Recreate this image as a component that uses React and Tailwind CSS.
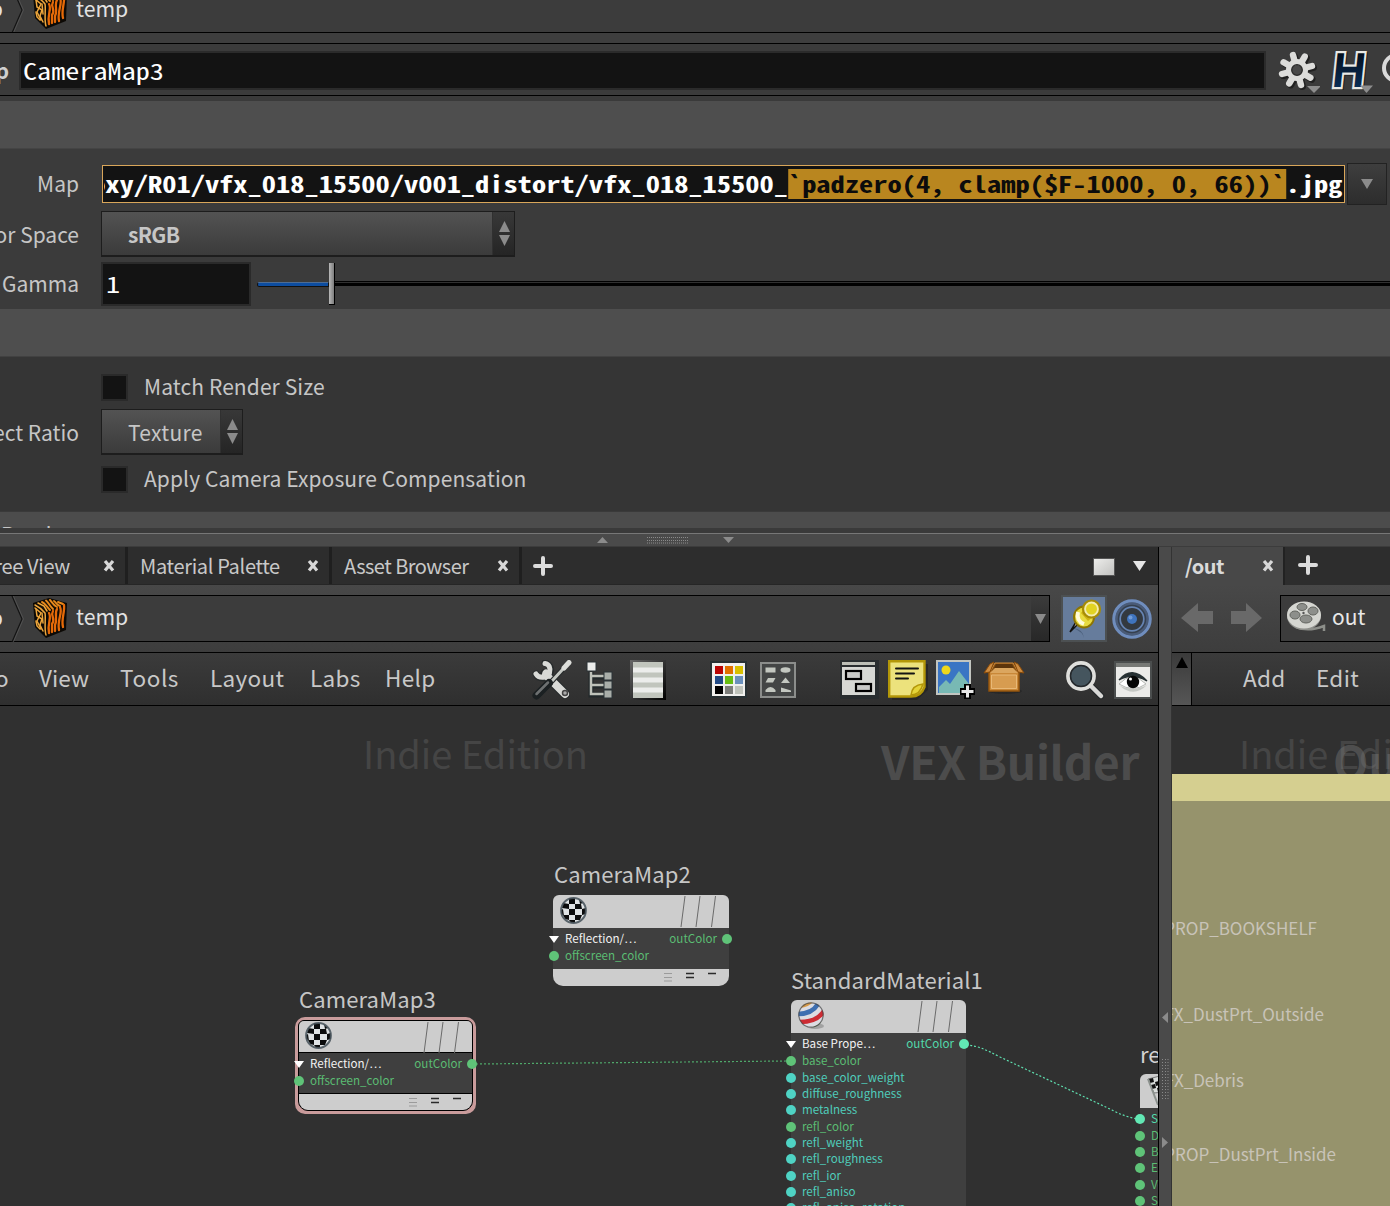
import React from "react";

const SANS = "font-['Noto_Sans_CJK_SC','Noto_Sans_CJK_JP',sans-serif]";
const MONO = "font-['Noto_Sans_Mono_CJK_SC','Noto_Sans_Mono_CJK_JP','DejaVu_Sans_Mono',monospace]";

function TigerBox() {
  return (
    <svg width="36" height="42" viewBox="0 0 36 42" className="shrink-0">
      <path d="M1 6 L17 1 L35 6 L34 33 L14 41 L3 30Z" fill="#0c0905" />
      <path d="M2 7 L17 2 L33 6 L14 15Z" fill="#191005" />
      <g fill="none" strokeLinecap="round">
        <g stroke="#eda63c" strokeWidth="1.5">
          <path d="M3 8 C7 10 10 12 13 16 C14 20 12 33 14 38" />
          <path d="M3 11 L9 16 L5 24 L9 32" />
          <path d="M4 12 L5 19 L10 22 L8 28 L11 34" />
          <path d="M4 24 L5 29 L8 32M10 16 L11 26" />
          <path d="M6 6 L12 9 L15 14" />
        </g>
        <g stroke="#e98a1c" strokeWidth="1.9">
          <path d="M10 5 C13 6 14 9 18 13" />
          <path d="M14 3.5 C17 6 17 8 21 12" />
          <path d="M18 3 C20 5 21 8 25 10" />
          <path d="M22 4 C24 5 24 8 28 9" />
          <path d="M26 5 L31 7" />
        </g>
        <g stroke="#e56a08" strokeWidth="2.3">
          <path d="M17 16 C20 21 15 26 17 36" />
          <path d="M21 14 C18 19 24 21 20 27 L20 35" />
          <path d="M25 12 C22 17 26 22 23 28 L23 34" />
          <path d="M28 10 C31 16 25 22 27 33" />
          <path d="M32 8 C33 15 29 22 31 30" />
        </g>
      </g>
    </svg>
  );
}

function Chevron() {
  return (
    <svg width="14" height="46" viewBox="0 0 14 46" className="shrink-0" fill="none">
      <path d="M1 0 L11 23 L1 46" stroke="#141414" strokeWidth="1.2" />
      <path d="M2.4 0 L12.4 23 L2.4 46" stroke="#575757" strokeWidth="0.8" />
    </svg>
  );
}

function Tri({ className, dir = "down", w = 12, h = 10, fill = "#8b8b8b" }) {
  const d = {
    down: `M0 0H${w}L${w / 2} ${h}Z`,
    up: `M0 ${h}H${w}L${w / 2} 0Z`,
    left: `M${w} 0V${h}L0 ${h / 2}Z`,
    right: `M0 0V${h}L${w} ${h / 2}Z`,
  }[dir];
  return (
    <svg width={w} height={h} className={className}>
      <path d={d} fill={fill} />
    </svg>
  );
}

function Gear() {
  return (
    <svg width="42" height="44" viewBox="0 0 42 44">
      <g stroke="#161616" strokeWidth="7" strokeLinecap="round" opacity=".7">
        {[8, 53, 98, 143].map((a) => (
          <path key={a} d="M20.5 7V38" transform={`rotate(${a - 23} 20.5 22.5)`} />
        ))}
      </g>
      <g stroke="#dcdcda" strokeWidth="6.4" strokeLinecap="round">
        {[8, 53, 98, 143].map((a) => (
          <path key={a} d="M19 5.500V36.500" transform={`rotate(${a - 23} 19 21)`} />
        ))}
      </g>
      <circle cx="19" cy="21" r="11" fill="#dcdcda" />
      <circle cx="19" cy="21" r="5.300" fill="#484848" stroke="#2a2a2a" strokeWidth="1.300" />
      <path d="M29 37H43L36 44Z" fill="#8d8d8d" />
    </svg>
  );
}

function HLogo() {
  return (
    <svg width="44" height="44" viewBox="0 0 44 44">
      <defs>
        <linearGradient id="hg" x1="0" y1="0" x2="0" y2="1">
          <stop offset="0" stopColor="#02060c" />
          <stop offset="1" stopColor="#0b3566" />
        </linearGradient>
      </defs>
      <g transform="translate(4.500 -0.500) skewX(-6)" fontFamily="Liberation Sans" fontWeight="bold" fontSize="49">
        <text x="2" y="39.500" textLength="33" lengthAdjust="spacingAndGlyphs" fill="#1c1c1c" stroke="#1c1c1c" strokeWidth="4">H</text>
        <text x="0.500" y="38" textLength="33" lengthAdjust="spacingAndGlyphs" fill="url(#hg)" stroke="#e9e9e6" strokeWidth="4.500" paintOrder="stroke">H</text>
      </g>
      <path d="M30 36.500H43L36.500 44Z" fill="#8d8d8d" />
    </svg>
  );
}

function Stepper() {
  return (
    <div className="flex w-[22px] flex-col items-center justify-center gap-[3px] border-l border-[#303030] bg-gradient-to-b from-[#383838] to-[#252525] pl-px">
      <Tri dir="up" w={11} h={11} />
      <Tri w={11} h={11} />
    </div>
  );
}

function Label({ children }) {
  return <div className="flex w-[79px] shrink-0 justify-end whitespace-nowrap leading-none">{children}</div>;
}

function Check({ children }) {
  return (
    <div className="flex h-[28px] items-center pl-[101px]">
      <span className="h-[27px] w-[27px] border-2 border-[#2a2a2a] bg-[#131313]" />
      <span className="ml-4 whitespace-nowrap pb-[2px] leading-none tracking-[0.1px]">{children}</span>
    </div>
  );
}

function CloseX() {
  return (
    <svg width="12" height="12" viewBox="0 0 12 12">
      <path d="M2 1L10 10.500M10 1L2 10.500" stroke="#d8d8d8" strokeWidth="3.2" />
    </svg>
  );
}

function Plus() {
  return (
    <svg width="20" height="20" viewBox="0 0 20 20">
      <path d="M10 2V18M2 10H18" stroke="#dcdcdc" strokeWidth="4" strokeLinecap="round" />
    </svg>
  );
}

function Tools() {
  return (
    <svg width="40" height="40" viewBox="0 0 40 40">
      <g fill="none" strokeLinecap="round">
        <path d="M13 14L33 34" stroke="#272b2c" strokeWidth="10" />
        <path d="M4 14C7 20 16 19 18 13C20 8 17 4 13 3" stroke="#272b2c" strokeWidth="7" />
        <path d="M14 15L33 34" stroke="#d9dad7" strokeWidth="8" />
        <path d="M4 14C7 19 16 18 17.500 13C19 8 17 4 13 3.500" stroke="#d9dad7" strokeWidth="5" />
        <path d="M14 13L15 14" stroke="#d9dad7" strokeWidth="7" />
        <circle cx="33" cy="33" r="2.500" stroke="#444" strokeWidth="1.500" fill="#aaa" />
        <path d="M20 21L33 7" stroke="#2b2e2f" strokeWidth="5.500" />
        <path d="M20 21L31 9" stroke="#c6c9c4" strokeWidth="3" />
        <path d="M32 8L37 2.500" stroke="#dddeda" strokeWidth="5" />
        <path d="M4.500 35.500L17 23" stroke="#1b2022" strokeWidth="8" />
        <path d="M4.500 34L16 22.500" stroke="#6d7071" strokeWidth="2.500" />
      </g>
    </svg>
  );
}

function TreeIcon() {
  return (
    <svg width="28" height="38" viewBox="0 0 28 38">
      <rect x="1" y="1" width="9" height="9" fill="#ecedeb" stroke="#2b3336" />
      <path d="M5 11V34H18M5 16H18M5 25H18" fill="none" stroke="#22292b" strokeWidth="5" />
      <path d="M5 11V33H18M5 15H18M5 24H18" fill="none" stroke="#bfc2ba" strokeWidth="2.500" />
      <g fill="#a9aea9" stroke="#2b3336"><rect x="18" y="11" width="8" height="8" /><rect x="18" y="20" width="8" height="8" /><rect x="18" y="29" width="8" height="8" /></g>
    </svg>
  );
}

function ListIcon() {
  return (
    <svg width="36" height="40" viewBox="0 0 36 40">
      <defs><linearGradient id="lg1" x1="0" y1="0" x2="1" y2="1"><stop offset="0" stopColor="#666" /><stop offset="1" stopColor="#000" /></linearGradient></defs>
      <rect width="36" height="40" fill="url(#lg1)" />
      <rect x="3" y="2" width="30" height="36" fill="#c1c5bd" />
      <path d="M3 10H33M3 20H33M3 30H33" stroke="#ecedeb" strokeWidth="5" />
    </svg>
  );
}

function Palette() {
  const c = ["#b80404", "#e07000", "#d8c000", "#204a87", "#68bd12", "#6a90bd", "#000", "#7c7d7a", "#c0c4bc"];
  return (
    <svg width="37" height="37" viewBox="0 0 37 37">
      <rect width="37" height="37" fill="#273033" />
      <rect x="2" y="2" width="33" height="33" fill="#f0f0ee" />
      {c.map((f, i) => <rect key={i} x={5 + (i % 3) * 10} y={5 + Math.floor(i / 3) * 10} width="8" height="8" fill={f} />)}
    </svg>
  );
}

function Shapes() {
  return (
    <svg width="36" height="36" viewBox="0 0 36 36">
      <rect x="1" y="1" width="34" height="34" fill="#434545" stroke="#8b8d8b" strokeWidth="2" />
      <g fill="#c3c7c0">
        <rect x="5.500" y="5.500" width="10" height="5" /><ellipse cx="25.500" cy="8" rx="5" ry="2.800" />
        <path d="M8 16H15.500L13 20.500H5.500ZM25.500 15.500L30 21H21ZM5.500 30V28Q10.500 22 15.500 28V30ZM21 30V25.500L31 28.500V30Z" />
      </g>
    </svg>
  );
}

function Boxes() {
  return (
    <svg width="40" height="40" viewBox="0 0 40 40">
      <rect x="0" y="0" width="39" height="39" fill="#282d2f" />
      <rect x="2" y="2" width="33" height="3" fill="#bbbeb6" /><rect x="2" y="7" width="33" height="28" fill="#d6d8d4" />
      <g fill="#c9cac8" stroke="#000" strokeWidth="2.200"><rect x="6" y="11" width="15" height="8" /><rect x="16" y="24" width="15" height="7" /></g>
    </svg>
  );
}

function Note() {
  return (
    <svg width="40" height="40" viewBox="0 0 40 40">
      <path d="M4 4H40V30L29 40H4Z" fill="#222" opacity=".7" />
      <path d="M1.200 1.200H36.500V27Q33 37 22 36.500H1.200Z" fill="#ece27c" stroke="#b39708" strokeWidth="2.400" />
      <path d="M23 35Q24 25 35 24Q32 35 23 35Z" fill="#e4d438" stroke="#b39708" strokeWidth="1.500" />
      <path d="M8 8.500H30M8 13.500H26M8 18.500H20" stroke="#141414" strokeWidth="2" strokeLinecap="round" />
    </svg>
  );
}

function Picture() {
  return (
    <svg width="42" height="42" viewBox="0 0 42 42">
      <rect x="1" y="1" width="33" height="33" fill="#3a75c4" stroke="#c2c5c0" strokeWidth="2" />
      <circle cx="10" cy="10" r="4.500" fill="#eed81b" />
      <path d="M3 33V27L10 20L14 24L23 11L33 24V33Z" fill="#78b9b4" />
      <path d="M31.500 24V39M24 31.500H39" stroke="#000" strokeWidth="7" />
      <path d="M31.500 25.500V37.500M25.500 31.500H37.500" stroke="#e8e8e8" strokeWidth="3" />
    </svg>
  );
}

function Carton() {
  return (
    <svg width="42" height="36" viewBox="0 0 42 36">
      <ellipse cx="22" cy="31" rx="17" ry="3" fill="#222" opacity=".6" />
      <path d="M6 12H36V31H6Z" fill="#c98838" stroke="#94540d" strokeWidth="1.500" />
      <path d="M8.500 15H33.500V28.500H8.500Z" fill="#d79c50" stroke="#e8b876" />
      <path d="M12 3H30L35 12H7Z" fill="#875012" stroke="#d18a38" />
      <path d="M13 4L11 8H31L29 4Z" fill="#5d350b" />
      <path d="M11 2L7 12L1 13L7 4ZM31 2L35 12L41 13L35 4Z" fill="#cd8b40" stroke="#894b09" />
      <path d="M7 13L12 8H30L35 13Z" fill="#dba65f" />
    </svg>
  );
}

function Magnifier() {
  return (
    <svg width="40" height="40" viewBox="0 0 40 40">
      <path d="M25 25L36 36" stroke="#25282a" strokeWidth="6.500" strokeLinecap="round" />
      <path d="M25 25L36 36" stroke="#d9d9d7" strokeWidth="4.500" strokeLinecap="round" />
      <circle cx="16" cy="16" r="13" fill="#45555e" stroke="#dfdfdc" strokeWidth="3.800" />
      <circle cx="16" cy="16" r="10.500" fill="none" stroke="#25292c" strokeWidth="1.500" />
    </svg>
  );
}

function Eye() {
  return (
    <svg width="38" height="38" viewBox="0 0 38 38">
      <rect width="38" height="38" fill="#4b4e4e" />
      <rect x="2" y="2" width="34" height="4" fill="#777976" /><rect x="2" y="6" width="34" height="30" fill="#ebebe9" />
      <path d="M5 23Q18 9 32 23Q19 32 5 23Z" fill="#fff" stroke="#b6b8b5" />
      <path d="M5 19Q18 4 33 20Q18 11 5 19Z" fill="#273134" stroke="#273134" strokeWidth="1.300" />
      <circle cx="19" cy="21" r="6.200" fill="#050606" />
      <circle cx="16.500" cy="18" r="1.500" fill="#fff" />
      <path d="M6 25Q20 37 33 24Q20 31 6 25Z" fill="#c5c8c4" />
    </svg>
  );
}

function Pin() {
  return (
    <div className="flex h-[47px] w-[46px] items-center justify-center border-2 border-[#4c5052] bg-[#667c9c]">
      <svg width="42" height="43" viewBox="0 0 42 43">
        <path d="M10 31Q20 32 21 41Q20 35 10 31Z" fill="#33455d" opacity=".5" />
        <path d="M15 27L7 35L13 25Z" fill="#eee" stroke="#111" strokeWidth="1.500" />
        <ellipse cx="21" cy="20" rx="10" ry="10.500" fill="#e8db41" stroke="#8d7503" strokeWidth="2" />
        <path d="M15 15Q13 24 21 27" stroke="#fffbd9" strokeWidth="4" fill="none" />
        <path d="M18 16L25 24L32 18L24 9Z" fill="#cfb313" />
        <circle cx="28.500" cy="12" r="8.500" fill="#f3ebad" stroke="#a68b05" strokeWidth="2.200" />
        <circle cx="28.500" cy="12" r="5.500" fill="#e2d322" />
      </svg>
    </div>
  );
}

function Target() {
  return (
    <svg width="42" height="42" viewBox="0 0 42 42">
      <circle cx="21" cy="21" r="18" fill="#35404f" stroke="#6f8dbd" strokeWidth="3.500" />
      <circle cx="21" cy="21" r="15.500" fill="none" stroke="#4a5b77" strokeWidth="2.500" />
      <circle cx="21" cy="21" r="11.800" fill="#333940" stroke="#6684b3" strokeWidth="1.700" />
      <circle cx="21" cy="21" r="5" fill="#3f74be" />
      <circle cx="19.500" cy="19.500" r="2" fill="#6f9bd8" />
    </svg>
  );
}

function Reel() {
  return (
    <svg width="42" height="34" viewBox="0 0 42 34">
      <path d="M10 27Q22 32 38 26V31" fill="none" stroke="#8d8f8a" strokeWidth="2.500" />
      <ellipse cx="18" cy="16" rx="17" ry="14" fill="#8f908c" />
      <ellipse cx="18" cy="15" rx="17" ry="13.500" fill="#d5d6d1" />
      <g fill="#8d8f8b" stroke="#62645f"><ellipse cx="16" cy="7" rx="5" ry="3.500" /><ellipse cx="27" cy="11" rx="5" ry="4" /><ellipse cx="9" cy="15" rx="5" ry="4" /><ellipse cx="20" cy="19" rx="6" ry="4" /></g>
      <circle cx="17.500" cy="13" r="1.200" fill="#555" />
    </svg>
  );
}

function Checker() {
  return (
    <svg width="27" height="27" viewBox="0 0 27 27">
      <circle cx="13.500" cy="13.500" r="13" fill="#dfe3e5" />
      <path d="M9 1H15V7H9ZM3 6L9 7V12L2 11ZM15 7H21L22 12H15ZM9 12H15V18H9ZM22 12L26 11V17L22 18ZM1 13L3 12L4 19L1 17ZM3 18L9 18V23L5 22ZM15 18H22L20 23H15ZM9 23H15V26H11ZM19 2L23 6L20 7Z" fill="#0b0c0d" />
      <circle cx="13.500" cy="13.500" r="12.400" fill="none" stroke="#4b565e" strokeWidth="2" opacity=".9" />
    </svg>
  );
}

function Ball() {
  return (
    <svg width="27" height="27" viewBox="0 0 27 27">
      <defs><clipPath id="ballc"><circle cx="13" cy="13" r="12.500" /></clipPath></defs>
      <ellipse cx="17" cy="24" rx="9" ry="3" fill="#777" opacity=".5" />
      <g clipPath="url(#ballc)">
        <rect width="27" height="27" fill="#dcdce2" />
        <path d="M2 6Q11 5 15 0L9 -2L0 4Z" fill="#d79a47" />
        <path d="M0 12Q14 12 20 2" fill="none" stroke="#3f6fb0" strokeWidth="4.500" />
        <path d="M2 20Q19 20 26 9" fill="none" stroke="#cd2c34" strokeWidth="4.500" />
        <path d="M8 27Q20 25 27 16V27Z" fill="#56793e" />
      </g>
      <circle cx="13" cy="13" r="12.200" fill="none" stroke="#444" strokeWidth="1.300" opacity=".7" />
    </svg>
  );
}

function Slashes() {
  return (
    <svg width="40" height="33" viewBox="0 0 40 33">
      <path d="M5 1L1 32M20 1L16 32M35.500 1L31.500 32" stroke="#6a6a6a" strokeWidth="1" />
    </svg>
  );
}

function Node({ className, title, selected, section, inputs, out, outText, outDot, icon, tall }) {
  return (
    <div className={`absolute w-[176px] ${className}`}>
      <div className={`absolute left-[1px] whitespace-nowrap text-[22px] leading-[30px] tracking-[0.14px] text-[#c6c6c6] ${tall ? "-top-[36px]" : "-top-[37px]"}`}>{title}</div>
      {selected && <div className="absolute -left-[3px] -right-[2px] -top-[3px] h-[97px] rounded-[10px] bg-[#c99b9b]" />}
      <div className={`relative overflow-hidden bg-[#3f3f3f] ${tall ? "ml-px h-[240px] rounded-t-[6px]" : "h-[91px] rounded-t-[6px] rounded-b-[10px]"} ${selected ? "mr-[1px] border-[1.500px] border-black" : ""}`}>
        <div className={`flex justify-between bg-[#cdcdcd] pr-[9px] ${selected ? "h-[32px] border-b border-black pl-[6px]" : "h-[33px] pl-[7px]"}`}>
          <div className={selected ? "pt-[1px]" : "pt-[2px]"}>{icon}</div>
          <Slashes />
        </div>
        {!tall && <div className={`h-[41px] ${selected ? "border-b border-black" : ""}`} />}
        {!tall && (
          <div className={`flex h-[18px] items-start justify-end gap-[14px] bg-[#cdcdcd] pt-[3px] ${selected ? "pr-[11px]" : "pr-[13px]"}`}>
            <svg width="8" height="10"><path d="M0 1.500H8M0 5.500H8M0 9H8" stroke="#9b9b9b" /></svg>
            <svg width="8" height="8"><path d="M0 1.500H8M0 5.500H8" stroke="#2a2a2a" strokeWidth="1.300" /></svg>
            <svg width="8" height="4"><path d="M0 1.500H8" stroke="#2a2a2a" strokeWidth="1.300" /></svg>
          </div>
        )}
      </div>
      <div className="absolute left-0 top-[35px] w-[175px] text-[11.600px]">
        <div className="flex h-[18px] items-center text-[#f2f2f2]">
          <Tri w={10} h={7} fill="#fff" className="-ml-1 shrink-0" />
          <span className="ml-[6px] whitespace-nowrap leading-none">{section}</span>
          <span className={`ml-auto leading-none ${outText}`}>{out}</span>
          <span className={`-mr-[4px] ml-[5px] h-[10px] w-[10px] rounded-full ${outDot}`} />
        </div>
        {inputs.map(([label, green]) => (
          <div key={label} className={`-ml-1 flex h-[16.350px] items-center ${green ? "text-[#5bbd73]" : "text-[#4fcdbb]"}`}>
            <span className={`h-[10px] w-[10px] shrink-0 rounded-full ${green ? "bg-[#5fc378]" : "bg-[#4fd3c4]"}`} />
            <span className="ml-[6px] whitespace-nowrap leading-none">{label}</span>
          </div>
        ))}
      </div>
    </div>
  );
}

function Tab({ children, className }) {
  return (
    <div className={`flex h-full shrink-0 items-center justify-between border-r-[3px] border-[#1f1f1f] pl-[12px] pr-[10px] ${className}`}>
      <span className="whitespace-nowrap leading-none">{children}</span>
      <CloseX />
    </div>
  );
}

function Grip({ vertical }) {
  return vertical ? (
    <svg width="8" height="42"><path d="M1.500 0V42M4.500 0V42M7 0V42" stroke="#8a8a8a" strokeDasharray="1 2" /></svg>
  ) : (
    <svg width="42" height="8"><path d="M0 1.500H42M0 4.500H42M0 7H42" stroke="#8a8a8a" strokeDasharray="1 1" /></svg>
  );
}

function Crumbs() {
  return (
    <>
      <div className="flex w-[3px] justify-end pb-[4px] leading-none">shop</div>
      <div className="ml-[8px]"><Chevron /></div>
      <div className="-mt-[2px] ml-[7px]"><TigerBox /></div>
      <span className="ml-[8px] pb-[5px] leading-none">temp</span>
    </>
  );
}

function Parameters() {
  return (
    <section className="h-[533px] overflow-hidden bg-[#3a3a3a]">
      <div className="flex h-[33px] overflow-hidden border-b border-black bg-[#3c3c3c]">
        <div className="-mt-[13px] flex h-[46px] items-center text-[21.200px] text-[#e2e2e2]"><Crumbs /></div>
      </div>
      <div className="h-[11px] border-b border-black bg-[#3e3e3e]" />
      <div className="flex h-[52px] items-center border-b border-black bg-[#3b3b3b]">
        <div className="flex w-[9px] shrink-0 justify-end whitespace-nowrap text-[21.500px] font-bold leading-none text-[#cfcfcf]">Camera Map</div>
        <div className={`ml-[10px] mt-px flex h-[39px] w-[1247px] shrink-0 items-center border-2 border-[#2b2b2b] bg-[#131313] pl-[2px] text-[22.500px] leading-none text-white ${MONO}`}>
          <span className="origin-left scale-x-[1.253]">CameraMap3</span>
        </div>
        <div className="ml-[12px] flex shrink-0 gap-[10px] pt-[2px]"><Gear /><HLogo /></div>
        <svg width="14" height="44" viewBox="0 0 14 44" className="ml-[8px] shrink-0 overflow-hidden"><circle cx="15" cy="20" r="13" fill="none" stroke="#dadada" strokeWidth="4" /></svg>
      </div>
      <div className="mt-[5px] h-[48px] border-b border-[#444] bg-[#4e4e4e]" />
      <div className="h-[160px] bg-[#3b3b3b] pt-[15px] text-[21px] text-[#c6c6c6]">
        <div className="flex h-[40px] items-center">
          <div className="pb-[2px]"><Label>Map</Label></div>
          <div className={`ml-[23px] flex h-[38px] w-[1243px] shrink-0 items-center overflow-hidden border border-[#d9a65a] bg-[#131313] text-[22.500px] font-bold leading-[30px] text-white ${MONO}`}>
            <div className="ml-[1px] flex h-[30px] w-[1239px] shrink-0 justify-end overflow-hidden whitespace-pre">
              <div className="flex h-[30px] shrink-0 origin-right scale-x-[1.264] leading-[28px]">
                <span>proxy/R01/vfx_018_15500/v001_distort/vfx_018_15500_</span>
                <span className="bg-[#b9861f] text-[#0c0c0c]">`padzero(4, clamp($F-1000, 0, 66))`</span>
                <span>.jpg</span>
              </div>
            </div>
          </div>
          <div className="ml-[2px] flex h-[42px] w-[40px] shrink-0 items-center justify-center border border-[#222] bg-gradient-to-b from-[#3e3e3e] to-[#2d2d2d]"><Tri w={12} h={10} /></div>
        </div>
        <div className="mt-[7px] flex h-[46px] items-center">
          <Label>Color Space</Label>
          <div className="ml-[22px] flex h-[46px] w-[414px] border border-b-2 border-[#1d1d1d] bg-gradient-to-b from-[#535353] to-[#3b3b3b]">
            <span className="flex-1 self-center pl-[26px] pt-[2px] font-bold leading-none tracking-[-0.7px]">sRGB</span>
            <Stepper />
          </div>
        </div>
        <div className="mt-[5px] flex h-[44px] items-center">
          <div className="pb-[2px]"><Label>Gamma</Label></div>
          <div className={`ml-[22px] flex h-[44px] w-[150px] items-center border-2 border-[#2a2a2a] bg-[#131313] pb-[2px] pl-[3px] text-[22.500px] leading-none text-white ${MONO}`}><span className="origin-left scale-x-[1.253]">1</span></div>
          <div className="ml-[6px] h-[5px] w-[72px] shrink-0 rounded-l border border-[#111] border-t-[#4d6d95] bg-[#0d4da0]" />
          <div className="h-[42px] w-[6px] shrink-0 border-b border-r border-black bg-gradient-to-r from-[#b9b9b9] to-[#7c7c7c]" />
          <div className="-mt-px h-[5px] flex-1 border-b-[3px] border-t border-black bg-[#303030]" />
        </div>
      </div>
      <div className="h-[48px] border-b border-[#414141] bg-[#4e4e4e]" />
      <div className="h-[154px] bg-[#353535] pt-[16px] text-[21px] text-[#c6c6c6]">
        <Check>Match Render Size</Check>
        <div className="mt-[8px] flex h-[46px] items-center">
          <Label>Aspect Ratio</Label>
          <div className="ml-[22px] flex h-[46px] w-[142px] border border-b-2 border-[#1d1d1d] bg-gradient-to-b from-[#535353] to-[#3b3b3b]">
            <span className="flex-1 self-center pl-[26px] pt-[2px] leading-none tracking-[0.3px]">Texture</span>
            <Stepper />
          </div>
        </div>
        <div className="mt-[10px]"><Check>Apply Camera Exposure Compensation</Check></div>
      </div>
      <div className="h-[19px] overflow-hidden border-b-2 border-t border-[#3a3a3a] bg-[#4c4c4c] pt-[9px] text-[21px] leading-[26px] text-[#c6c6c6]"><span className="ml-[1px]">Render</span></div>
    </section>
  );
}

function LeftPane() {
  return (
    <section className="flex w-[1159px] shrink-0 flex-col overflow-hidden border-r border-black">
      <div className="flex h-[38px] shrink-0 items-center border-b border-[#262626] bg-[#2d2d2d] text-[20px] tracking-[-0.33px] text-[#c8c8c8]">
        <div className="flex h-full w-[128px] shrink-0 items-center border-r-[3px] border-[#1f1f1f]">
          <div className="flex w-[70px] justify-end whitespace-nowrap leading-none">Tree View</div>
          <div className="ml-[33px]"><CloseX /></div>
        </div>
        <Tab className="w-[204px]">Material Palette</Tab>
        <Tab className="w-[190px] tracking-[-0.52px]">Asset Browser</Tab>
        <div className="ml-[11px]"><Plus /></div>
        <div className="ml-auto mr-[12px] flex items-center gap-[18px]">
          <div className="mt-[2px] h-[18px] w-[22px] border border-[#555] bg-gradient-to-br from-[#ededeb] to-[#c2c2c0]" />
          <Tri w={13} h={10} fill="#e6e6e6" />
        </div>
      </div>
      <div className="flex h-[67px] shrink-0 bg-gradient-to-b from-[#484848] to-[#3d3d3d] pt-[10px]">
        <div className="flex h-[47px] w-[1050px] items-center border-y border-r border-black bg-[#3c3c3c] text-[21.200px] text-[#e2e2e2]">
          <Crumbs />
          <div className="ml-auto flex h-full w-[18px] items-center justify-center bg-gradient-to-b from-[#3b3b3b] to-[#282828]"><Tri w={11} h={10} /></div>
        </div>
        <div className="ml-[11px]"><Pin /></div>
        <div className="ml-[4px] pt-[3px]"><Target /></div>
      </div>
      <div className="flex h-[54px] shrink-0 items-center border-y border-black bg-gradient-to-b from-[#3b3b3b] to-[#2f2f2f] text-[22.500px] leading-none tracking-[0.35px] text-[#c8c8c8]">
        <div className="flex w-[532px] shrink-0 pb-[4px]">
          <div className="flex w-[9px] shrink-0 justify-end">Go</div>
          <div className="ml-[30px] w-[81px] shrink-0 tracking-[0.1px]">View</div>
          <div className="w-[90px] shrink-0 tracking-[0.6px]">Tools</div>
          <div className="w-[100px] shrink-0">Layout</div>
          <div className="w-[75px] shrink-0">Labs</div>
          <div>Help</div>
        </div>
        <div className="mt-[2px]"><Tools /></div>
        <div className="ml-[14px] mt-[2px]"><TreeIcon /></div>
        <div className="ml-[16px] mt-[2px]"><ListIcon /></div>
        <div className="ml-[44px]"><Palette /></div>
        <div className="ml-[13px] mt-[2px]"><Shapes /></div>
        <div className="ml-[44px] mt-[2px]"><Boxes /></div>
        <div className="ml-[8px] mt-[2px]"><Note /></div>
        <div className="ml-[8px] mt-[3px]"><Picture /></div>
        <div className="-mt-[2px] ml-[5px]"><Carton /></div>
        <div className="ml-[40px] mt-[2px]"><Magnifier /></div>
        <div className="ml-[9px] mt-px"><Eye /></div>
      </div>
      <div className="relative min-h-0 flex-1 overflow-hidden bg-[#303030]">
        <div className="absolute left-[363px] top-[25px] whitespace-nowrap text-[38px] leading-[44px] text-[#454545]">Indie Edition</div>
        <div className="absolute left-[881px] top-[30px] whitespace-nowrap text-[46px] font-bold leading-[48px] tracking-[-0.3px] text-[#4c4c4c]">VEX Builder</div>
        <svg className="absolute inset-0" width="1158" height="500" fill="none">
          <path d="M476 358L788 355" stroke="#4fa86a" strokeWidth="1.200" strokeDasharray="2 2" />
          <path d="M966 339C980 340 986 344 1000 351L1112 404Q1125 411 1138 413" stroke="#5fe0b0" strokeWidth="1.200" strokeDasharray="2 2" />
        </svg>
        <Node className="left-[553px] top-[189px]" title="CameraMap2" section="Reflection/…" out="outColor" outText="text-[#5bbd73]" outDot="bg-[#5fc378]" inputs={[["offscreen_color", true]]} icon={<Checker />} />
        <Node selected className="left-[298px] top-[314px]" title="CameraMap3" section="Reflection/…" out="outColor" outText="text-[#5bbd73]" outDot="bg-[#5fc378]" inputs={[["offscreen_color", true]]} icon={<Checker />} />
        <Node tall className="left-[790px] top-[294px]" title="StandardMaterial1" section="Base Prope…" out="outColor" outText="text-[#52d9ab]" outDot="bg-[#62e8b4]" icon={<Ball />}
          inputs={[["base_color", true], ["base_color_weight"], ["diffuse_roughness"], ["metalness"], ["refl_color", true], ["refl_weight"], ["refl_roughness"], ["refl_ior"], ["refl_aniso"], ["refl_aniso_rotation"]]} />
        <div className="absolute left-[1140px] top-[333px] w-[100px] text-[22px] leading-[28px] text-[#d2d2d2]">render</div>
        <div className="absolute left-[1140px] top-[368px] h-[140px] w-[100px] rounded-tl-[6px] bg-[#3d3d3d]">
          <div className="h-[34px] rounded-tl-[6px] bg-[#cdcdcd]">
            <svg width="30" height="34" viewBox="0 0 30 34"><path d="M8 5L20 2L24 18L14 19Z" fill="#d8dcda" stroke="#777" /><path d="M9 5L13 4L14 8L10 9ZM15 8L19 7L20 11L16 12ZM11 11L15 10L16 14L12 15ZM17 14L21 13L22 17L18 18Z" fill="#111" /><path d="M8 5L18 31" stroke="#8b918d" strokeWidth="2" /></svg>
          </div>
        </div>
        <div className="absolute left-[1135px] top-[405px] text-[11.600px]">
          {["Surface", "Displacement", "Bump", "Emission", "Volume", "Shader"].map((p, i) => (
            <div key={p} className={`flex h-[16.350px] items-center ${i ? "text-[#5bbd73]" : "text-[#52d9ab]"}`}>
              <span className={`h-[10px] w-[10px] shrink-0 rounded-full ${i ? "bg-[#5fc378]" : "bg-[#62e8b4]"}`} />
              <span className="ml-[6px] leading-none">{p}</span>
            </div>
          ))}
        </div>
      </div>
    </section>
  );
}

function RightPane() {
  return (
    <section className="flex min-w-0 flex-1 flex-col overflow-hidden">
      <div className="flex h-[38px] shrink-0 bg-[#2d2d2d]">
        <div className="flex w-[113px] items-center border-r-2 border-[#222] bg-[#484848] pl-[13px] text-[20px] font-bold leading-none tracking-[-0.5px] text-[#dadada]">/out<span className="ml-auto mr-[9px]"><CloseX /></span></div>
        <div className="ml-[13px] mt-[8px]"><Plus /></div>
      </div>
      <div className="flex h-[67px] shrink-0 bg-gradient-to-b from-[#484848] to-[#3d3d3d] pt-[10px]">
        <svg width="108" height="47" viewBox="0 0 108 47" className="shrink-0" fill="#696969"><path d="M9 23L26 8V16H41V29H26V37ZM90 23L74 8V16H59V29H74V37Z" /></svg>
        <div className="flex h-[47px] w-[120px] shrink-0 items-center border border-black bg-[#3c3c3c] pl-[5px] text-[21px] leading-none text-[#e8e8e8]"><div className="-mt-[4px]"><Reel /></div><span className="ml-[4px] pb-[5px]">out</span></div>
      </div>
      <div className="flex h-[54px] shrink-0 items-center border-y border-black bg-gradient-to-b from-[#3b3b3b] to-[#2f2f2f] text-[22.500px] leading-none tracking-[0.35px] text-[#c8c8c8]">
        <div className="flex h-full w-[20px] justify-center border-r border-black bg-gradient-to-b from-[#3b3b3b] to-[#565656] pt-[4px]"><Tri dir="up" w={12} h={11} fill="#000" /></div>
        <span className="ml-[51px] w-[73px] pb-[4px]">Add</span>
        <span className="pb-[4px]">Edit</span>
      </div>
      <div className="relative min-h-0 flex-1 overflow-hidden bg-[#303030]">
        <div className="absolute left-[67px] top-[25px] whitespace-nowrap text-[38px] leading-[44px] text-[#454545]">Indie Edition</div>
        <div className="absolute left-[161px] top-[30px] whitespace-nowrap text-[46px] font-bold leading-[48px] text-[#808080]/40">Outputs</div>
        <div className="absolute inset-x-0 bottom-0 top-[68px] border-t-[27px] border-[#d5cf90] bg-[#96936c]" />
        <div className="absolute inset-0 whitespace-nowrap text-[17px] leading-[24px] text-[#c8c3b8]">
          <div className="absolute right-[73px] top-[210px]">PROP_BOOKSHELF</div>
          <div className="absolute right-[66px] top-[296px]">FX_DustPrt_Outside</div>
          <div className="absolute right-[146px] top-[362px]">FX_Debris</div>
          <div className="absolute right-[54px] top-[436px]">PROP_DustPrt_Inside</div>
        </div>
      </div>
    </section>
  );
}

export default function App() {
  return (
    <main className={`h-[1206px] w-[1390px] overflow-hidden bg-[#303030] ${SANS}`}>
      <Parameters />
      <div className="flex h-[14px] items-center border-b border-t border-b-[#3c3c3c] border-t-[#777] bg-[#4a4a4a] pl-[597px]">
        <Tri dir="up" w={11} h={6} />
        <div className="ml-[39px] flex"><Grip /></div>
        <Tri w={11} h={6} className="ml-[34px]" />
      </div>
      <div className="flex h-[659px]">
        <LeftPane />
        <div className="flex w-[13px] shrink-0 flex-col items-center border-r border-[#333] bg-[#4a4a4a] pt-[465px]">
          <Tri dir="left" w={6} h={11} />
          <div className="mt-[36px] flex"><Grip vertical /></div>
          <Tri dir="right" w={6} h={11} className="mt-[36px]" />
        </div>
        <RightPane />
      </div>
    </main>
  );
}
